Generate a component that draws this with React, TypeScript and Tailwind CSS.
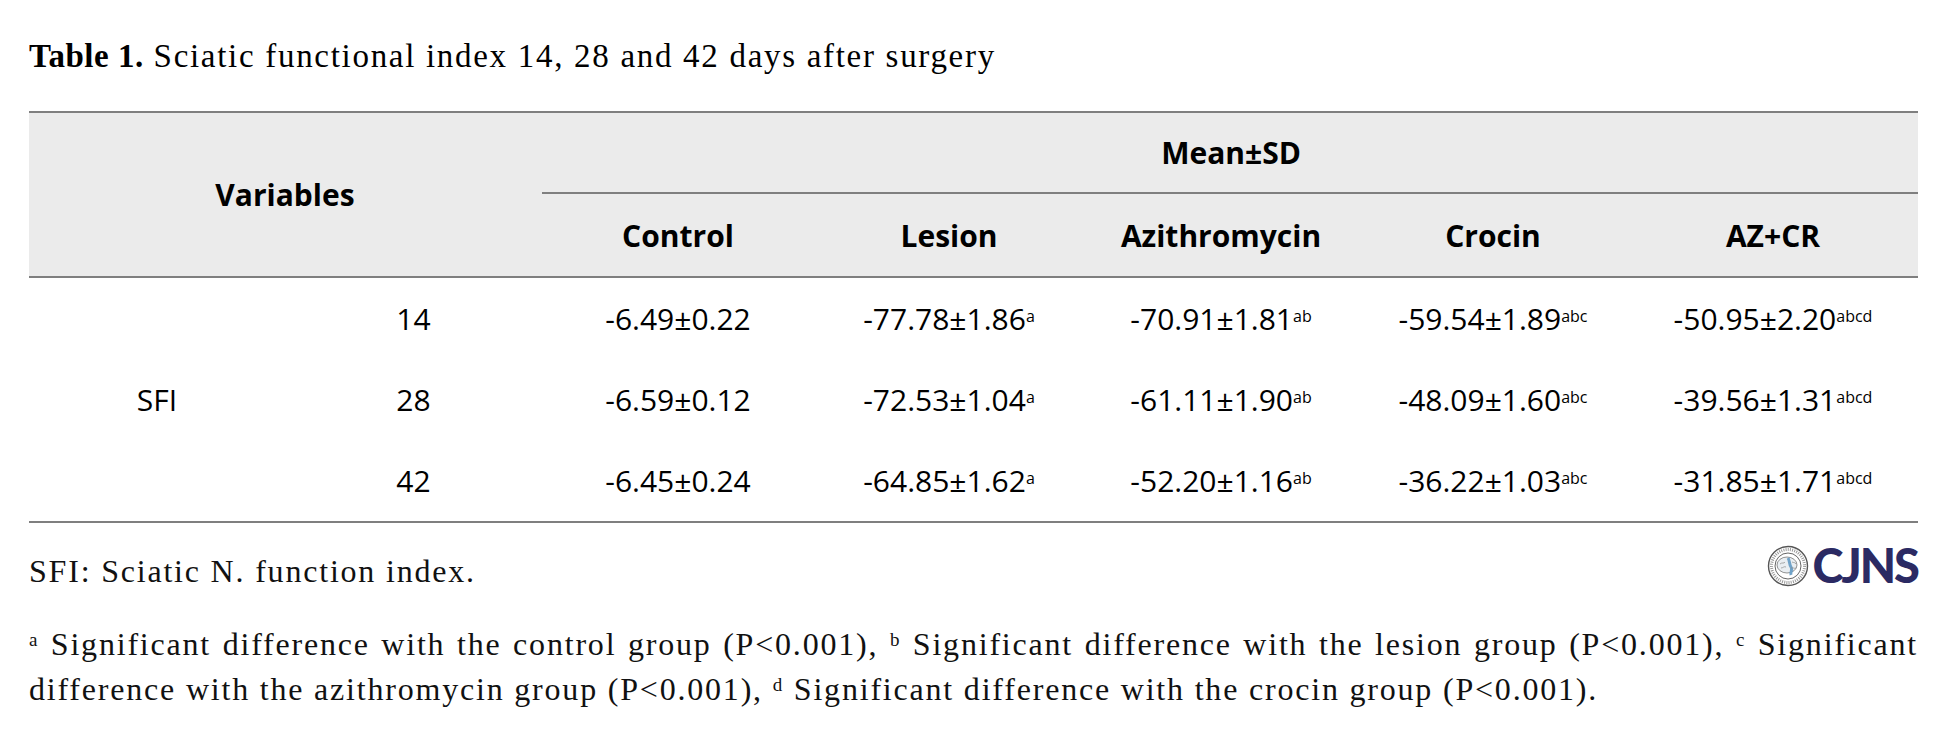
const serif = "font-['Liberation_Serif','Times_New_Roman',serif]";
const sans = "font-['Open_Sans','Lato',sans-serif]";

const groups = ["Control", "Lesion", "Azithromycin", "Crocin", "AZ+CR"];

const rows = [
  {
    day: "14",
    values: [
      ["-6.49±0.22", ""],
      ["-77.78±1.86", "a"],
      ["-70.91±1.81", "ab"],
      ["-59.54±1.89", "abc"],
      ["-50.95±2.20", "abcd"],
    ],
  },
  {
    day: "28",
    values: [
      ["-6.59±0.12", ""],
      ["-72.53±1.04", "a"],
      ["-61.11±1.90", "ab"],
      ["-48.09±1.60", "abc"],
      ["-39.56±1.31", "abcd"],
    ],
  },
  {
    day: "42",
    values: [
      ["-6.45±0.24", ""],
      ["-64.85±1.62", "a"],
      ["-52.20±1.16", "ab"],
      ["-36.22±1.03", "abc"],
      ["-31.85±1.71", "abcd"],
    ],
  },
];

const cols = "grid grid-cols-[256px_257px_272px_270px_274px_270px_1fr]";

function Logo() {
  return (
    <div className="flex items-center gap-[3px]">
      <svg width="42" height="42" viewBox="0 0 42 42">
        <circle cx="21" cy="21" r="19.5" fill="#fff" stroke="#555" strokeWidth="1.4" />
        <circle cx="21" cy="21" r="13" fill="none" stroke="#666" strokeWidth="1" />
        <circle cx="21" cy="21" r="16.5" fill="none" stroke="#999" strokeWidth="3" strokeDasharray="1 1.2" />
        <ellipse cx="20" cy="20" rx="10" ry="8" fill="#e9eef2" stroke="#777" strokeWidth="0.8" />
        <path d="M21 13c2 3 1 6 3 9s-1 5 0 8" stroke="#6fa2c8" strokeWidth="3" fill="none" />
        <path d="M13 19c2-2 4 0 5-2M14 23c2 0 3-2 5-1M25 17c2 1 3 0 4 2M24 23c2-1 3 1 5 0" stroke="#888" strokeWidth="0.7" fill="none" />
      </svg>
      <span className="font-['Lato',sans-serif] text-[47px] leading-none font-black tracking-[-2px] text-[#2b2a63]">
        CJNS
      </span>
    </div>
  );
}

export default function App() {
  return (
    <main className="h-[752px] w-[1957px] bg-white px-[29px] pt-[36px] text-black">
      <h1 className={`${serif} text-[33px] leading-[40px] tracking-[1.7px]`}>
        <span className="font-bold tracking-[0.5px]">Table 1.</span> Sciatic functional index 14, 28 and 42 days after
        surgery
      </h1>

      <div className="mt-[35px] w-[1889px]">
        <section className={`${sans} border-t-2 border-b-2 border-[#7f7f7f] bg-[#ebebeb]`}>
          <div className={`${cols} h-[163px] text-[30px] font-bold`}>
            <div className="col-span-2 row-span-2 flex items-center justify-center pr-[1px]">Variables</div>
            <div className="col-span-5 flex h-[81px] items-center justify-center border-b-2 border-[#7f7f7f] pl-[2px]">
              Mean±SD
            </div>
            {groups.map((g) => (
              <div key={g} className="flex h-[82px] items-center justify-center">
                {g}
              </div>
            ))}
          </div>
        </section>

        <section className={`${sans} border-b-2 border-[#7f7f7f] text-[30px]`}>
          {rows.map((r, i) => (
            <div key={r.day} className={`${cols} h-[81px] items-center`}>
              <div className="text-center">{i === 1 ? "SFI" : ""}</div>
              <div className="text-center">{r.day}</div>
              {r.values.map(([v, s]) => (
                <div key={v} className="text-center">
                  {v}
                  {s && <sup className="text-[16px]">{s}</sup>}
                </div>
              ))}
            </div>
          ))}
        </section>

        <div className={`${serif} text-[32px] tracking-[1.8px] text-[#111]`}>
          <div className="flex items-start justify-between pt-[28px]">
            <p className="leading-[40px]">SFI: Sciatic N. function index.</p>
            <div className="-mt-[9px]">
              <Logo />
            </div>
          </div>
          <div className="mt-[31px] leading-[45px]">
            <p className="text-justify [text-align-last:justify]">
              <sup className="text-[19px]">a</sup> Significant difference with the control group (P&lt;0.001),{" "}
              <sup className="text-[19px]">b</sup> Significant difference with the lesion group (P&lt;0.001),{" "}
              <sup className="text-[19px]">c</sup> Significant
            </p>
            <p>
              difference with the azithromycin group (P&lt;0.001), <sup className="text-[19px]">d</sup> Significant
              difference with the crocin group (P&lt;0.001).
            </p>
          </div>
        </div>
      </div>
    </main>
  );
}
